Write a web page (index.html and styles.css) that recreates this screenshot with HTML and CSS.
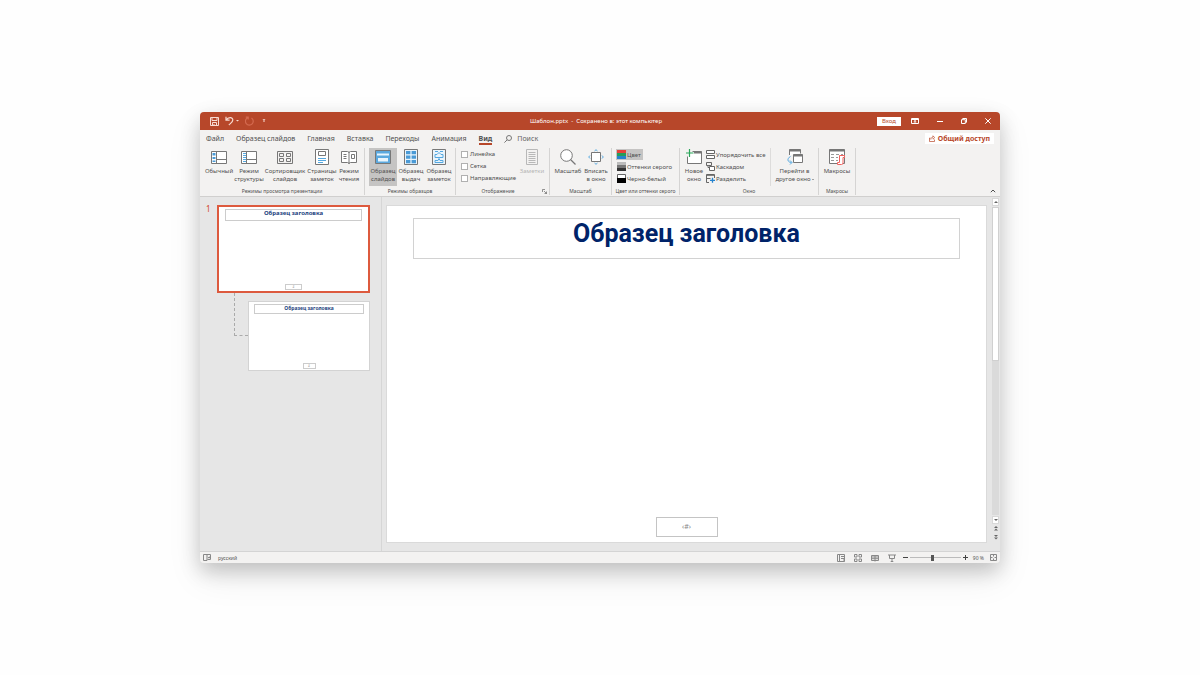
FILE: index.html
```html
<!DOCTYPE html>
<html lang="ru">
<head>
<meta charset="utf-8">
<title>Шаблон.pptx</title>
<link rel="stylesheet" href="styles.css">
</head>
<body>
<main class="window">
  <header class="titlebar">
    <div class="quick">
      <button class="plain" aria-label="Сохранить"><svg width="9" height="9" viewBox="0 0 9 9"><path d="M.5.5h8v8h-8zM2 .5v3h5v-3M2.5 8.500v-3h4v3M4 7v1.500"/></svg></button>
      <button class="plain undo" aria-label="Отменить"><svg width="14" height="10" viewBox="0 0 14 10"><path d="M1 .8v3.400h3.600M1.200 4C3 1.200 7.800.6 7.800 4c0 2.200-2 3.200-4 5" stroke-width="1.200"/><path class="solid" d="M11 4h3l-1.500 1.600z"/></svg></button>
      <button class="plain faded" aria-label="Повторить"><svg width="9" height="10" viewBox="0 0 9 10"><path d="M2.500 1.800A3.900 3.900 0 1 0 6.500 2M.8 1.200h2.400v2.400" stroke-width="1.200"/></svg></button>
      <button class="plain more" aria-label="Настройка панели"><svg width="4" height="4" viewBox="0 0 4 4"><path class="solid" d="M.8 0h2.400v.8H.8zM.8 1.500h2.400L2 3.200z"/></svg></button>
    </div>
    <div class="doc">Шаблон.pptx&nbsp; -&nbsp; Сохранено в: этот компьютер</div>
    <div class="controls">
      <button class="login">Вход</button>
      <button class="plain" aria-label="Параметры ленты"><svg width="8" height="6" viewBox="0 0 8 6"><path d="M.5.5h7v5h-7zM.5 1.500h7M4 5V2.600M2.700 3.700L4 2.500l1.300 1.200"/></svg></button>
      <button class="plain" aria-label="Свернуть"><svg width="6" height="6" viewBox="0 0 6 6"><path d="M0 3.500h6"/></svg></button>
      <button class="plain" aria-label="Восстановить"><svg width="6" height="6" viewBox="0 0 6 6"><path d="M.5 1.700h3.800v3.800H.5zM1.700 1.500V.5h3.800v3.800H4.500"/></svg></button>
      <button class="plain" aria-label="Закрыть"><svg width="6" height="6" viewBox="0 0 6 6"><path d="M.3.3l5.400 5.400M5.700.3L.3 5.700"/></svg></button>
    </div>
  </header>

  <nav class="tabs">
    <button>Файл</button>
    <button>Образец слайдов</button>
    <button>Главная</button>
    <button>Вставка</button>
    <button>Переходы</button>
    <button>Анимация</button>
    <button class="current">Вид</button>
    <label class="search"><svg width="8" height="8" viewBox="0 0 8 8"><circle cx="5" cy="3" r="2.500"/><path d="M3.200 4.800L.4 7.600"/></svg><input type="text" placeholder="Поиск" aria-label="Поиск"></label>
    <button class="share"><svg width="6" height="7" viewBox="0 0 6 7"><path d="M1.500 3H.5v3.500h5V4.500M1.800 4.600c.2-1.800 1-2.400 2.200-2.400V.8l1.700 1.800L4 4.200V3.200" stroke-width=".7"/></svg>Общий доступ</button>
  </nav>

  <section class="ribbon">
    <div class="group">
      <div class="tools views">
        <button class="tool w28"><svg class="ico" viewBox="0 0 16 16"><path d="M.5 2.500h15v12H.5z" fill="#fff"/><path d="M5.500 2.500v12M5.500 10.500h10"/><path class="blue" d="M1.500 4h3v2.500h-3zM1.500 8h3v2h-3zM1.500 11.500h3V13h-3z"/></svg><span>Обычный</span></button>
        <button class="tool w30"><svg class="ico" viewBox="0 0 16 16"><path d="M.5 2.500h15v12H.5z" fill="#fff"/><path d="M5.500 2.500v12M5.500 10.500h10"/><path class="blueline" d="M2 4.500h3M2 6.500h3M2 8.500h3M2 10.500h3M2 12.500h3"/></svg><span>Режим<br>структуры</span></button>
        <button class="tool w40"><svg class="ico" viewBox="0 0 16 16"><path d="M.5 2.500h15v12H.5zM2.500 4.500h4v3h-4zM9.500 4.500h4v3h-4zM2.500 9.500h4v3h-4zM9.500 9.500h4v3h-4z"/></svg><span>Сортировщик<br>слайдов</span></button>
        <button class="tool w32"><svg class="ico" viewBox="0 0 16 16"><path d="M1.500.5h13v15h-13z" fill="#fff"/><path d="M4.500 2.500h7v4h-7z"/><path class="blueline" d="M4 9.500h8M4 11.500h8M4 13.500h5"/></svg><span>Страницы<br>заметок</span></button>
        <button class="tool w20"><svg class="ico" viewBox="0 0 16 16"><path d="M.5 2.500h6q1.500 0 1.500 1.500 0-1.500 1.500-1.500h6v11h-6Q8 13.500 8 15q0-1.500-1.500-1.500h-6z" fill="#fff"/><path d="M8 4v10M2.500 5.500h3M2.500 7.500h3M2.500 9.500h3M10.500 5.500h3v4h-3z"/></svg><span>Режим<br>чтения</span></button>
      </div>
      <div class="caption">Режимы просмотра презентации</div>
    </div>

    <div class="group">
      <div class="tools masters">
        <button class="tool w28 pressed" aria-pressed="true"><svg class="ico" viewBox="0 0 16 16"><path d="M.5 1.500h15v13H.5z" fill="#5ba8de"/><path fill="#eaf5fc" stroke="none" d="M2 4.500h12v2H2zM3 9h10v3.500H3z"/></svg><span>Образец<br>слайдов</span></button>
        <button class="tool w28"><svg class="ico" viewBox="0 0 16 16"><path d="M1.500.5h13v15h-13z" fill="#eaf4fb"/><path class="blue" d="M3 2h4.400v3.200H3zM8.600 2H13v3.200H8.600zM3 6.500h4.400v3.200H3zM8.600 6.500H13v3.200H8.600zM3 11h4.400v3.200H3zM8.600 11H13v3.200H8.600z"/></svg><span>Образец<br>выдач</span></button>
        <button class="tool w28"><svg class="ico" viewBox="0 0 16 16"><path d="M1.500.5h13v15h-13z" fill="#eaf4fb"/><path class="blueline" d="M4 2.500h3M9 2.500h3M4 5.500h2l2-2 2 2h2v3H4zM4 11.500h3l1-2 1 2h3v2H4z"/></svg><span>Образец<br>заметок</span></button>
      </div>
      <div class="caption">Режимы образцов</div>
    </div>

    <div class="group">
      <div class="tools display">
        <div class="checks">
          <label><input type="checkbox">Линейка</label>
          <label><input type="checkbox">Сетка</label>
          <label><input type="checkbox">Направляющие</label>
        </div>
        <button class="tool w28" disabled><svg class="ico" viewBox="0 0 16 16"><path d="M2.500.5h11v15h-11zM4.500 3.500h7M4.500 5.500h7M4.500 7.500h7M4.500 9.500h7M4.500 11.500h7M4.500 13.500h7"/></svg><span>Заметки</span></button>
      </div>
      <div class="caption wide">Отображение<button class="launcher" aria-label="Параметры сетки"><svg width="5" height="5" viewBox="0 0 5 5"><path d="M.5 3V.5H3M2 2l2.500 2.500M4.500 2.500v2h-2" stroke-width=".6"/></svg></button></div>
    </div>

    <div class="group">
      <div class="tools scale">
        <button class="tool w28"><svg class="ico" viewBox="0 0 16 16"><circle cx="6.500" cy="6.500" r="5.800" fill="#fff"/><path d="M10.500 10.500l5 5" stroke-width="1.200"/></svg><span>Масштаб</span></button>
        <button class="tool w28"><svg class="ico" viewBox="0 0 16 16"><path d="M3.500 3.500h9v9h-9z" fill="#fff"/><path class="blueline" d="M6.500 2L8 .7 9.500 2M6.500 14L8 15.300 9.500 14M2 6.500L.7 8 2 9.500M14 6.500L15.300 8 14 9.500"/></svg><span>Вписать<br>в окно</span></button>
      </div>
      <div class="caption">Масштаб</div>
    </div>

    <div class="group">
      <div class="rows colors">
        <button class="row pressed" aria-pressed="true"><svg width="9" height="9" viewBox="0 0 9 9"><path fill="#e5423b" stroke="none" d="M0 0h9v3H0z"/><path fill="#249e59" stroke="none" d="M0 3h9v3H0z"/><path fill="#2583ce" stroke="none" d="M0 6h9v3H0z"/></svg>Цвет</button>
        <button class="row"><svg width="9" height="9" viewBox="0 0 9 9"><path fill="#bbb" stroke="none" d="M0 0h9v3H0z"/><path fill="#777" stroke="none" d="M0 3h9v3H0z"/><path fill="#333" stroke="none" d="M0 6h9v3H0z"/></svg>Оттенки серого</button>
        <button class="row"><svg width="9" height="9" viewBox="0 0 9 9"><path fill="#fff" d="M.5.500h8v8h-8z"/><path fill="#000" stroke="none" d="M0 4h9v5H0z"/></svg>Черно-белый</button>
      </div>
      <div class="caption">Цвет или оттенки серого</div>
    </div>

    <div class="group">
      <div class="tools wins">
        <button class="tool w20"><svg class="ico" viewBox="0 0 16 16"><path d="M6.500 2.500h9v12H1.500V7.500" fill="#fff"/><path d="M8 3.500h7.500" stroke-width="2"/><path d="M3.500 0v8M-.5 4h8" stroke="#2aa65a" stroke-width="1.200"/></svg><span>Новое<br>окно</span></button>
        <div class="rows arrange">
          <button class="row"><svg width="9" height="9" viewBox="0 0 9 9"><path d="M.5.500h8v3h-8zM.5 5.500h8v3h-8z" fill="#fff"/></svg>Упорядочить все</button>
          <button class="row"><svg width="9" height="9" viewBox="0 0 9 9"><path d="M.5.500h5v3h-5z"/><path fill="#fff" d="M3.500 4.500h5v4h-5zM2 3.500v2h1"/></svg>Каскадом</button>
          <button class="row"><svg width="9" height="9" viewBox="0 0 9 9"><path d="M3 8.500H.5v-8h8V4M.5 1.300h8M.5 4.500h4"/><path stroke="#2583ce" d="M6.500 3.800v5M4 6.300h5" stroke-width="1.300"/></svg>Разделить</button>
        </div>
        <button class="tool switch"><svg class="ico" viewBox="0 0 16 16"><path d="M2.500 6V.5h11v4" fill="#fff"/><path d="M2.500 1.500h11" stroke-width="2"/><path d="M6.500 5.500h9v8h-9z" fill="#fff"/><path d="M6.500 6.500h9" stroke-width="2"/><path class="blueline" d="M3.500 7.500C-.5 9.500.5 13.500 4.500 13.500M3 11.500l2 2-2 2"/></svg><span>Перейти в<br>другое окно&thinsp;<i class="caret"></i></span></button>
      </div>
      <div class="caption">Окно</div>
    </div>

    <div class="group">
      <div class="tools macros">
        <button class="tool w28"><svg class="ico" viewBox="0 0 16 16"><path d="M.5.500h15v14H.5z" fill="#fff"/><path d="M.5 1.500h15" stroke-width="2"/><path d="M2 5.500h3M7 5.500h3M12 5.500h2M2 8.500h3M7 8.500h2M2 11.500h3M7 11.500h2" stroke="#999"/><path stroke="#f0625f" fill="#fff" d="M10.500 6.500h5v2h-1.500v5.500q0 1.500-1.500 1.500h-4v-2h2z"/></svg><span>Макросы</span></button>
      </div>
      <div class="caption">Макросы</div>
    </div>
    <button class="collapse" aria-label="Свернуть ленту"><svg width="6" height="4" viewBox="0 0 6 4"><path d="M.8 3.200L3 1l2.200 2.200"/></svg></button>
  </section>

  <div class="work">
    <aside class="thumbs">
      <span class="num">1</span>
      <div class="tree">
        <div class="thumb master"><div class="ttl">Образец заголовка</div><div class="pg">#</div></div>
        <div class="branch">
          <div class="elbow"></div>
          <div class="thumb layout"><div class="ttl">Образец заголовка</div><div class="pg">#</div></div>
        </div>
      </div>
    </aside>
    <div class="canvas">
      <div class="slide"><h1>Образец заголовка</h1><div class="pagenum">‹#›</div></div>
    </div>
    <div class="scroll">
      <button class="arrow" aria-label="Вверх"><svg width="4" height="2" viewBox="0 0 4 2"><path class="dark" d="M0 2h4L2 0z"/></svg></button>
      <div class="track"><div class="grip"></div></div>
      <button class="arrow" aria-label="Вниз"><svg width="4" height="2" viewBox="0 0 4 2"><path class="dark" d="M0 0h4L2 2z"/></svg></button>
      <button class="jump" aria-label="Предыдущий слайд"><svg width="4" height="5" viewBox="0 0 4 5"><path class="dark" d="M0 2h4L2 0zM0 4.500h4L2 2.500z"/></svg></button>
      <button class="jump" aria-label="Следующий слайд"><svg width="4" height="5" viewBox="0 0 4 5"><path class="dark" d="M0 0h4L2 2zM0 2.500h4L2 4.500z"/></svg></button>
    </div>
  </div>

  <footer class="status">
    <button class="plain" aria-label="Правописание"><svg width="8" height="7" viewBox="0 0 8 7"><path d="M4 .8v5.700H.5V.5H4M4 .5h3.500v5H4.500M5 3l1 1.200L7.500 2"/></svg></button>
    <span class="lang">русский</span>
    <div class="modes">
      <button class="plain" aria-label="Обычный"><svg width="8" height="8" viewBox="0 0 8 8"><path d="M.5.5h7v7h-7zM2.500.5v7M4 2.500h3M4 4.500h3v3"/></svg></button>
      <button class="plain" aria-label="Сортировщик"><svg width="8" height="8" viewBox="0 0 8 8"><path d="M.5.500h2.500v2.500H.5zM5 .5h2.500v2.500H5zM.5 5h2.500v2.500H.5zM5 5h2.500v2.500H5z"/></svg></button>
      <button class="plain" aria-label="Чтение"><svg width="8" height="8" viewBox="0 0 8 8"><path d="M.5 1.500h7v5h-7zM4 1v6.500M1 3h6M1 4.700h6"/></svg></button>
      <button class="plain" aria-label="Показ слайдов"><svg width="8" height="8" viewBox="0 0 8 8"><path d="M0 1h8M1.500 1v3.500h5V1M4 4.500v3M2.700 7.500h2.600"/></svg></button>
    </div>
    <div class="zoom">
      <button class="plain" aria-label="Уменьшить"><svg width="5" height="5" viewBox="0 0 5 5"><path d="M0 2.500h5" stroke="#444"/></svg></button>
      <input type="range" min="0" max="100" value="45" aria-label="Масштаб">
      <button class="plain" aria-label="Увеличить"><svg width="5" height="5" viewBox="0 0 5 5"><path d="M0 2.500h5M2.500 0v5" stroke="#444"/></svg></button>
    </div>
    <span class="pct">90 %</span>
    <button class="plain" aria-label="По размеру окна"><svg width="7" height="7" viewBox="0 0 7 7"><path d="M.5.500h6v6h-6zM3.500 0v2.500M3.500 4.500V7M0 3.500h2.500M4.500 3.500H7"/></svg></button>
  </footer>
</main>
</body>
</html>
```
FILE: styles.css
```css
* { box-sizing: border-box; }

body {
  margin: 0;
  padding: 112px 16px;
  background: #fefefe;
  color: #505050;
  font-family: "Noto Sans", "Open Sans", sans-serif;
  font-size: 6px;
  line-height: 8px;
}

button, input {
  margin: 0;
  padding: 0;
  border: 0;
  background: none;
  color: inherit;
  font: inherit;
}

svg { display: block; flex: none; fill: none; stroke: currentColor; }
.solid { fill: currentColor; stroke: none; }
.dark { fill: #666; stroke: none; }
.blue { fill: #4a9ad6; stroke: none; }
.blueline { stroke: #55a8e0; }

.window {
  width: 66.6667vw;
  min-width: 800px;
  margin: 0 auto;
  overflow: hidden;
  border-radius: 4px;
  background: #f3f2f1;
  box-shadow: 0 8px 20px rgba(0, 0, 0, .2), 0 14px 36px rgba(0, 0, 0, .08);
}

.plain { display: flex; align-items: center; }

/* Title bar */
.titlebar {
  display: grid;
  grid-template-columns: 1fr auto 1fr;
  align-items: center;
  height: 18px;
  background: #b7472a;
  color: #fff;
}
.quick { display: flex; align-items: center; gap: 6px; padding-left: 10px; color: #f8dcd3; }
.faded { color: #d46a50; }
.more { margin-left: 2px; }
.doc { padding-right: 8px; }
.controls { display: flex; align-items: center; justify-content: flex-end; gap: 18px; padding-right: 9px; }
.login { width: 24px; height: 9px; margin-right: -8px; background: #fff; color: #b7472a; line-height: 9px; }

/* Tabs */
.tabs { display: flex; align-items: center; gap: 12px; height: 17px; padding: 0 6px; font-size: 7px; line-height: 9px; }
.tabs button { padding: 2px 0 0; border-bottom: 2px solid transparent; white-space: nowrap; }
.tabs .current { border-color: #b7472a; font-weight: 700; }
.search { display: flex; align-items: center; gap: 5px; color: #777; }
.search input { width: 60px; outline: 0; }
.search input::placeholder { color: #666; opacity: 1; }
.tabs .share {
  display: flex;
  align-items: center;
  gap: 3px;
  margin-left: auto;
  padding: 1px 4px;
  border: 0;
  background: #fff;
  color: #b7472a;
  font-weight: 700;
}

/* Ribbon */
.ribbon {
  display: grid;
  grid-template-columns: 165px 91px 94px 62px 68px 139px 37px 1fr;
  padding: 1px 0;
  border-bottom: 1px solid #d0cfce;
}
.group { display: flex; flex-direction: column; border-right: 1px solid #d5d4d3; }
.tools { display: flex; height: 39px; }
.views { gap: 1px; padding-left: 5px; }
.masters { padding-left: 4px; }
.display { justify-content: space-between; padding: 0 3px 0 5px; }
.scale, .wins { padding-left: 4px; }
.macros { justify-content: center; }

.tool {
  display: flex;
  flex: none;
  flex-direction: column;
  align-items: center;
  justify-content: flex-start;
  gap: 2px;
  height: 38px;
  padding-top: 1px;
  text-align: center;
  white-space: nowrap;
}
.ico { width: 16px; height: 16px; color: #777; }
.row svg { color: #666; }
.tool:disabled { color: #b5b5b5; }
.tool:disabled .ico { color: #b8b8b8; }
.w20 { width: 20px; }
.w28 { width: 28px; }
.w30 { width: 30px; }
.w32 { width: 32px; }
.w40 { width: 40px; }
.pressed { background: #c5c4c3; }
.tools .switch { flex: 1; border-left: 1px solid #dddcdb; }
.caret { display: inline-block; border: 1px solid transparent; border-top-color: #555; }

.checks { display: flex; flex-direction: column; gap: 4px; padding-top: 2px; }
.checks label { display: flex; align-items: center; gap: 2px; }
.checks input { width: 7px; height: 7px; border: 1px solid #b0b0b0; background: #fff; appearance: none; }

.rows { display: flex; flex-direction: column; align-items: flex-start; gap: 1px; height: 39px; padding-top: 1px; }
.row { display: flex; align-items: center; gap: 1px; height: 11px; padding: 0 2px 0 1px; white-space: nowrap; }
.colors { padding-left: 4px; }
.arrange { width: 66px; padding-left: 1px; }

.caption { position: relative; height: 8px; font-size: 5px; text-align: center; white-space: nowrap; }
.wide { padding-right: 9px; }
.launcher { position: absolute; right: 2px; top: 2px; }
.collapse { align-self: end; justify-self: end; padding: 2px 4px; }

/* Workspace */
.work { display: grid; grid-template-columns: 182px 1fr 9px; background: #e6e6e6; }
.thumbs { display: grid; grid-template-columns: 17px 1fr; padding: 8px 11px 0 0; border-right: 1px solid #d6d6d6; }
.num { padding-left: 6px; color: #d24726; font-size: 8px; }
.thumb { display: flex; flex-direction: column; align-items: center; justify-content: space-between; background: #fff; color: #1d3f7e; font-weight: 700; }
.ttl { width: 100%; border: 1px solid #ccc; line-height: 7px; text-align: center; }
.pg { border: 1px solid #ccc; color: #888; font-size: 3px; font-weight: 400; line-height: 4px; text-align: center; }
.master { height: 88px; padding: 2px 6px 1px; border: 2px solid #dd5a3e; font-size: 6px; }
.master .ttl { height: 12px; }
.master .pg { width: 17px; }
.branch { display: grid; grid-template-columns: 14px 1fr; padding-left: 17px; }
.elbow { height: 43px; border: 1px dashed #aaa; border-width: 0 0 1px 1px; }
.layout { height: 70px; margin-top: 8px; padding: 2px 5px 1px; border: 1px solid #d3d3d3; font-size: 5px; }
.layout .ttl { height: 10px; }
.layout .pg { width: 13px; }

.canvas { padding: 8px 4px; }
.slide {
  display: flex;
  flex-direction: column;
  justify-content: space-between;
  align-items: center;
  aspect-ratio: 601 / 338;
  padding: 12px 26px 5px;
  border: 1px solid #dadada;
  background: #fff;
}
h1 {
  width: 100%;
  height: 41px;
  margin: 0;
  border: 1px solid #d2d2d2;
  color: #002369;
  font-family: Roboto, "Noto Sans", sans-serif;
  font-size: 25px;
  font-weight: 700;
  line-height: 30px;
  text-align: center;
}
.pagenum { width: 62px; height: 20px; border: 1px solid #c4c4c4; color: #888; font-size: 7px; line-height: 18px; text-align: center; }

.scroll { display: flex; flex-direction: column; padding: 1px 1px 9px; gap: 1px; }
.arrow { display: flex; align-items: center; justify-content: center; height: 8px; background: #fff; border: 1px solid #d8d8d8; }
.track { flex: 1; background: #dadada; }
.grip { height: 50%; border: 1px solid #d0d0d0; background: #fff; }
.jump { display: flex; justify-content: center; padding-top: 1px; height: 8px; }

/* Status bar */
.status { display: flex; align-items: center; height: 12px; padding: 0 3px; border-top: 1px solid #d4d4d4; font-size: 5px; color: #555; }
.status .plain { color: #888; }
.lang { margin-left: 7px; }
.modes { display: flex; gap: 9px; margin-left: auto; }
.zoom { display: flex; align-items: center; gap: 2px; margin: 0 5px 0 7px; }
.zoom input { width: 51px; height: 7px; appearance: none; background: linear-gradient(#bbb, #bbb) center / 100% 1px no-repeat; }
.zoom input::-webkit-slider-thumb { width: 3px; height: 6px; background: #555; appearance: none; }
.pct { margin-right: 6px; }
```
